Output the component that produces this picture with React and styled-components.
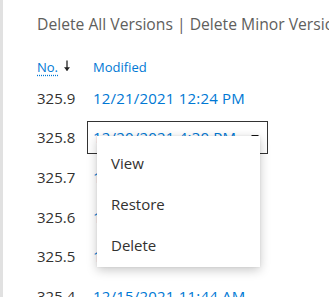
import React from "react";
import styled, { createGlobalStyle } from "styled-components";

const GlobalStyle = createGlobalStyle`
  html, body {
    margin: 0;
    padding: 0;
    background: #fff;
    overflow: hidden;
  }
  body {
    font-family: "Open Sans", "Noto Sans", sans-serif;
  }
`;

const versions = [
  { no: "325.9", modified: "12/21/2021 12:24 PM" },
  { no: "325.8", modified: "12/20/2021 4:30 PM", open: true },
  { no: "325.7", modified: "12/20/2021 4:12 PM" },
  { no: "325.6", modified: "12/17/2021 2:05 PM" },
  { no: "325.5", modified: "12/16/2021 9:31 AM" },
  { no: "325.4", modified: "12/15/2021 11:44 AM" },
];

const App = () => {
  return (
    <>
      <GlobalStyle />
      <Page>
        <Content>
          <Actions>Delete All Versions | Delete Minor Versions</Actions>
          <HeaderRow>
            <NoHeader>
              <abbr>No.</abbr>
              <SortArrow viewBox="0 0 8 12">
                <path d="M4 0.5V10.5" stroke="#222" strokeWidth="1.3" />
                <path d="M1 7.2L4 11L7 7.2Z" fill="#222" />
              </SortArrow>
            </NoHeader>
            <HeaderLink>Modified</HeaderLink>
          </HeaderRow>
          {versions.map((v) => (
            <Row key={v.no}>
              <NoCell>{v.no}</NoCell>
              <DateCell $open={v.open}>
                <span>{v.modified}</span>
                {v.open && <Caret />}
                {v.open && (
                  <Menu>
                    <MenuItem>View</MenuItem>
                    <MenuItem>Restore</MenuItem>
                    <MenuItem>Delete</MenuItem>
                  </Menu>
                )}
              </DateCell>
            </Row>
          ))}
        </Content>
      </Page>
    </>
  );
};

const Page = styled.div`
  width: 329px;
  height: 297px;
  border-left: 3px solid #e1e1e1;
  box-sizing: border-box;
  overflow: hidden;
`;

const Content = styled.div`
  padding: 13px 0 0 34px;
  display: flex;
  flex-direction: column;
`;

const Actions = styled.div`
  font-size: 15.7px;
  line-height: 22px;
  color: #605e5c;
  white-space: nowrap;
`;

const HeaderRow = styled.div`
  display: flex;
  align-items: center;
  height: 22px;
  margin-top: 21px;
  font-size: 13px;
`;

const NoHeader = styled.div`
  width: 56px;
  display: flex;
  align-items: center;
  gap: 5px;
  & > abbr {
    color: #0078d4;
    text-decoration: underline dotted;
    text-underline-offset: 3px;
  }
`;

const SortArrow = styled.svg`
  width: 8px;
  height: 12px;
  margin-top: -3px;
`;

const HeaderLink = styled.span`
  color: #0078d4;
`;

const Row = styled.div`
  display: flex;
  align-items: center;
  height: 39.6px;
  font-size: 15px;
`;

const NoCell = styled.div`
  width: 50px;
  color: #323130;
`;

const DateCell = styled.div`
  position: relative;
  display: flex;
  align-items: center;
  height: 33px;
  width: 181px;
  box-sizing: border-box;
  padding-left: 5px;
  color: #0078d4;
  letter-spacing: 0.2px;
  border: 1px solid ${(p) => (p.$open ? "#333" : "transparent")};
  white-space: nowrap;
`;

const Caret = styled.span`
  position: absolute;
  right: 8px;
  top: 13px;
  border-left: 4px solid transparent;
  border-right: 4px solid transparent;
  border-top: 4px solid #111;
`;

const Menu = styled.div`
  position: absolute;
  left: 9px;
  top: 14px;
  width: 163px;
  padding: 7px 0 1px;
  background: #fff;
  letter-spacing: 0;
  box-shadow: 0 3px 10px rgba(0, 0, 0, 0.22), 0 0 2px rgba(0, 0, 0, 0.08);
  z-index: 2;
  display: flex;
  flex-direction: column;
`;

const MenuItem = styled.div`
  height: 41px;
  display: flex;
  align-items: center;
  padding-left: 14px;
  font-size: 15px;
  color: #323130;
`;

export default App;
